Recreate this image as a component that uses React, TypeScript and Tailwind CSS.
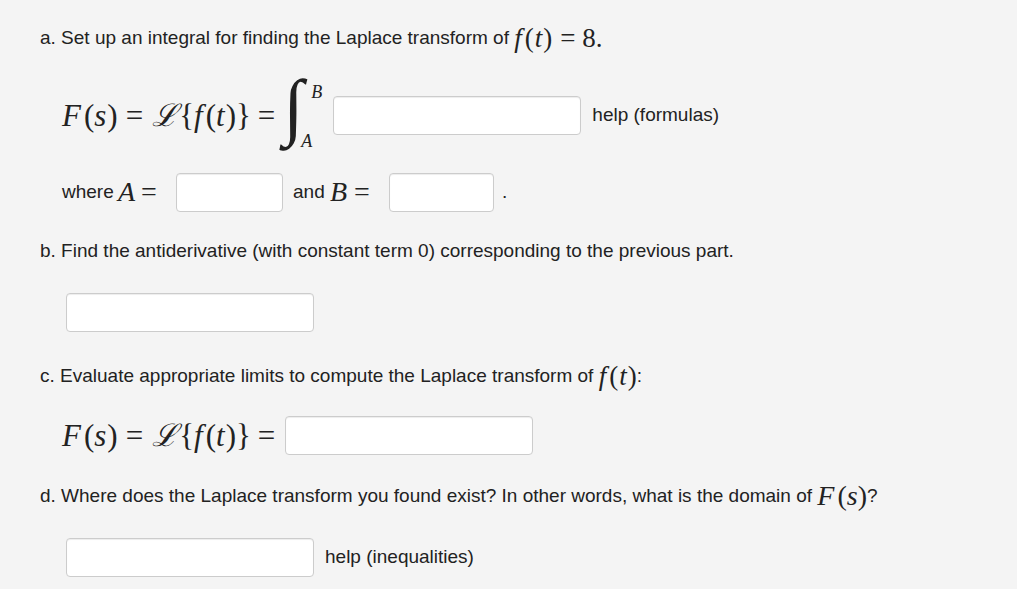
import React from "react";

const mathFont = { fontFamily: '"Liberation Serif", "DejaVu Serif", serif' };

function Mi({ children }: { children: React.ReactNode }) {
  return <span className="italic">{children}</span>;
}

function Box({ w }: { w: string }) {
  return (
    <input
      type="text"
      className={`${w} shrink-0 h-[39px] rounded-[4px] border border-[#cccccc] bg-white shadow-[inset_0_1px_1px_rgba(0,0,0,0.075)] outline-none`}
    />
  );
}

function Ft() {
  return (
    <span className="text-[27px] text-[#222]" style={mathFont}>
      <Mi>f</Mi>
      <span className="ml-[3px] mr-[1px]">(</span>
      <Mi>t</Mi>
      <span className="ml-[1px]">)</span>
    </span>
  );
}

// F(s) = L{f(t)} =
function FsL() {
  return (
    <span className="shrink-0 text-[31px] leading-none text-[#222] whitespace-nowrap" style={mathFont}>
      <Mi>F</Mi>
      <span className="ml-[3px]">(</span>
      <Mi>s</Mi>
      <span className="ml-[1px]">)</span>
      <span className="ml-[8px] mr-[9px]">=</span>
      <span className="italic mr-[1px]">ℒ</span>
      {"{"}
      <Mi>f</Mi>
      <span className="ml-[3px]">(</span>
      <Mi>t</Mi>
      <span className="ml-[1px]">)</span>
      {"}"}
      <span className="ml-[7px] mr-[8px]">=</span>
    </span>
  );
}

export default function App() {
  return (
    <div
      className="w-[1017px] h-[589px] bg-[#f4f4f4] text-[#222] text-[19px] overflow-hidden"
      style={{ fontFamily: '"Liberation Sans", Arial, sans-serif' }}
    >
      <div className="pl-[40px] pt-[22px]">
        <div className="flex items-center h-[32px]">
          <span>a. Set up an integral for finding the Laplace transform of&nbsp;</span>
          <Ft />
          <span className="text-[27px] ml-[8px]" style={mathFont}>
            = 8.
          </span>
        </div>

        <div className="flex items-center pl-[22px] mt-[23px] h-[76px]">
          <FsL />
          <span className="relative inline-block shrink-0 w-[50px] h-[76px]" style={mathFont}>
            <span className="absolute left-0 top-[-8px] text-[74px] leading-none">∫</span>
            <span className="absolute left-[28px] top-[6px] text-[18px] leading-none italic">B</span>
            <span className="absolute left-[18px] top-[55px] text-[18px] leading-none italic">A</span>
          </span>
          <Box w="w-[248px]" />
          <span className="ml-[11px]">help (formulas)</span>
        </div>

        <div className="flex items-center pl-[22px] mt-[19px] h-[40px]">
          <span className="inline-block shrink-0 w-[56px]">where</span>
          <span className="inline-flex items-center text-[28px]" style={mathFont}>
            <span className="inline-block shrink-0 w-[23px] italic">A</span>
            <span className="inline-block shrink-0 w-[35px]">=</span>
          </span>
          <Box w="w-[107px]" />
          <span className="inline-block shrink-0 w-[37px] ml-[10px]">and</span>
          <span className="inline-flex items-center text-[28px]" style={mathFont}>
            <span className="inline-block shrink-0 w-[24px] italic">B</span>
            <span className="inline-block shrink-0 w-[35px]">=</span>
          </span>
          <Box w="w-[105px]" />
          <span className="ml-[8px]">.</span>
        </div>

        <div className="flex items-center h-[32px] mt-[23px]">
          b. Find the antiderivative (with constant term 0) corresponding to the previous part.
        </div>

        <div className="pl-[26px] mt-[26px] h-[39px]">
          <Box w="w-[248px]" />
        </div>

        <div className="flex items-center mt-[28px] h-[32px]">
          <span>c. Evaluate appropriate limits to compute the Laplace transform of&nbsp;</span>
          <Ft />
          <span>:</span>
        </div>

        <div className="flex items-center pl-[22px] mt-[24px] h-[39px]">
          <FsL />
          <span className="ml-[2px]">
            <Box w="w-[248px]" />
          </span>
        </div>

        <div className="flex items-center mt-[25px] h-[32px]">
          <span>d. Where does the Laplace transform you found exist? In other words, what is the domain of&nbsp;</span>
          <span className="text-[28px]" style={mathFont}>
            <Mi>F</Mi>
            <span className="ml-[3px]">(</span>
            <Mi>s</Mi>)
          </span>
          <span>?</span>
        </div>

        <div className="flex items-center pl-[26px] mt-[26px] h-[39px]">
          <Box w="w-[248px]" />
          <span className="ml-[11px]">help (inequalities)</span>
        </div>
      </div>
    </div>
  );
}
